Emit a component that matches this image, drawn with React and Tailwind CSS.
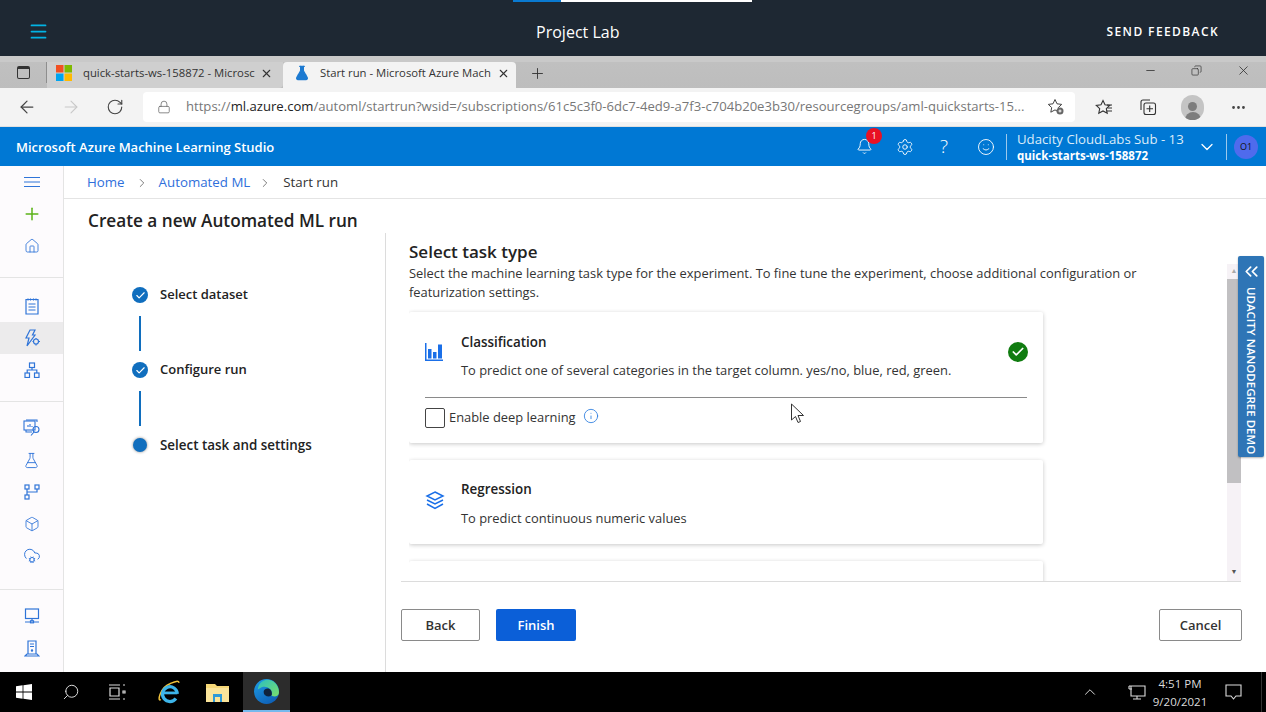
import React from 'react';
import {
  ArrowLeft, ArrowRight, Bell, Box, ChevronRight, ChevronDown, ChevronUp, ChevronsLeft, Copy, FlaskConical,
  Home, Menu, Minus, MoreHorizontal, Plus, RotateCw, Search, Settings, Smile, X, Lock, Info, Check,
  CloudCog
} from 'lucide-react';

const blue = '#1a6fe8';
const star = 'M8 1.500l2 4.300 4.700.6-3.400 3.200.9 4.600L8 11.900l-4.200 2.300.9-4.600L1.300 6.400 6 5.800z';

function NavIcon({ children, active }) {
  return (
    <div className={`h-[32px] flex items-center justify-center text-[#2f74d8] ${active ? 'bg-[#ecebec]' : ''}`}>
      {children}
    </div>
  );
}

function Sidebar() {
  return (
    <div className="w-[64px] shrink-0 bg-[#fdfbfd] border-r border-[#e4e4e4] flex flex-col">
      <div className="pb-[15px] border-b border-[#e4e4e4]">
        <NavIcon>
          <svg width="16" height="10" viewBox="0 0 16 10" stroke="currentColor" strokeWidth="1">
            <path d="M0 .5h16M0 5h16M0 9.500h16" />
          </svg>
        </NavIcon>
        <NavIcon><Plus size={20} strokeWidth={1.8} className="text-[#5bb318]" /></NavIcon>
        <NavIcon><Home size={16} strokeWidth={1.3} /></NavIcon>
      </div>
      <div className="pt-[12px] pb-[15px] border-b border-[#e4e4e4]">
        <NavIcon>
          <svg width="14" height="17" viewBox="0 0 14 17" fill="none" stroke="currentColor" strokeWidth="1.2">
            <path d="M1 1.500h12V16H1zM3 .5v2M5.500.5v2M8.500.5v2M11 .5v2M3.500 6h7M3.500 9h7M3.500 12h7" />
          </svg>
        </NavIcon>
        <NavIcon active>
          <svg width="16" height="18" viewBox="0 0 16 18" fill="none" stroke="currentColor" strokeWidth="1.2">
            <path d="M6 1h5L8.500 6H11l-8 11 2-8H2z" />
            <circle cx="12" cy="12.500" r="2.500" />
            <path d="M12 9v1M12 15v1.500M8.500 12.500h1M14.500 12.500H16" />
          </svg>
        </NavIcon>
        <NavIcon>
          <svg width="16" height="16" viewBox="0 0 16 16" fill="none" stroke="currentColor" strokeWidth="1.2">
            <rect x="5.500" y="1" width="5" height="4.500" />
            <rect x="1" y="11" width="4.500" height="4.500" />
            <rect x="10.500" y="11" width="4.500" height="4.500" />
            <path d="M8 5.500V8M3.200 11V8h9.600v3" />
          </svg>
        </NavIcon>
      </div>
      <div className="pt-[10px] pb-[17px] border-b border-[#e4e4e4]">
        <NavIcon>
          <svg width="18" height="18" viewBox="0 0 18 18" fill="none" stroke="currentColor" strokeWidth="1.1">
            <rect x="1" y="2" width="11" height="9" />
            <path d="M3 11v2h6M3 1h11v2M5 8V6M7 8V5M9 8V7" />
            <circle cx="13" cy="10.500" r="3" />
            <path d="M11 13l-3 3.500" />
          </svg>
        </NavIcon>
        <NavIcon><FlaskConical size={17} strokeWidth={1.3} /></NavIcon>
        <NavIcon>
          <svg width="16" height="16" viewBox="0 0 16 16" fill="none" stroke="currentColor" strokeWidth="1.2">
            <rect x="1" y="1" width="4" height="4" />
            <rect x="11" y="1" width="4" height="4" />
            <rect x="1" y="11" width="4" height="4" />
            <path d="M3 5v6M13 5v3H3" />
          </svg>
        </NavIcon>
        <NavIcon><Box size={16} strokeWidth={1.3} /></NavIcon>
        <NavIcon><CloudCog size={18} strokeWidth={1.3} /></NavIcon>
      </div>
      <div className="pt-[10px]">
        <NavIcon>
          <svg width="16" height="16" viewBox="0 0 16 16" fill="none" stroke="currentColor" strokeWidth="1.2">
            <rect x="1.500" y="1" width="13" height="9.500" />
            <path d="M8 10.500v3M1 14h5M10 14h5" />
            <rect x="6.500" y="12.800" width="3" height="2" />
          </svg>
        </NavIcon>
        <NavIcon>
          <svg width="16" height="17" viewBox="0 0 16 17" fill="none" stroke="currentColor" strokeWidth="1.2">
            <path d="M4 1h8v13H4zM6 4h4M6 6.500h4M1 16l2-2h10l2 2z" />
            <circle cx="8" cy="10.500" r="0.600" />
          </svg>
        </NavIcon>
      </div>
    </div>
  );
}

function StepDone({ label }) {
  return (
    <div className="flex items-center gap-[12px] h-[20px]">
      <div className="w-[16px] h-[16px] rounded-full bg-[#106ebe] flex items-center justify-center">
        <Check size={11} strokeWidth={2.5} className="text-white" />
      </div>
      <span className="text-[13px] font-semibold text-[#222]">{label}</span>
    </div>
  );
}

function Stepper() {
  return (
    <div className="w-[322px] shrink-0 border-r border-[#dcdcdc] pl-[68px] pt-[52px]">
      <StepDone label="Select dataset" />
      <div className="w-[2px] h-[35px] bg-[#106ebe] ml-[7px] mt-[11px] mb-[9px]" />
      <StepDone label="Configure run" />
      <div className="w-[2px] h-[35px] bg-[#106ebe] ml-[7px] mt-[11px] mb-[9px]" />
      <div className="flex items-center gap-[12px] h-[20px]">
        <div className="w-[14px] h-[14px] mx-[1px] rounded-full bg-[#106ebe] shadow-[0_0_3px_#888]" />
        <span className="text-[13.4px] font-semibold text-[#222]">Select task and settings</span>
      </div>
    </div>
  );
}

function Cards() {
  return (
    <div className="w-[634px] flex flex-col gap-[17px]">
      <div className="h-[131px] shrink-0 bg-white rounded-[2px] shadow-[0_1px_4px_rgba(0,0,0,0.22)] px-[16px]">
        <div className="h-[86px] border-b border-[#8a8a8a] flex items-center">
          <svg width="18" height="18" viewBox="0 0 18 18" fill={blue} className="shrink-0 mr-[18px] mt-[-5px]">
            <path d="M0 0h1.500v16.500H18V18H0z" />
            <path d="M3 6h3.500v9.500H3zM8 9h3.500v6.500H8zM13 1.500h4v14h-4z" />
          </svg>
          <div className="flex-1 mt-[4px]">
            <div className="text-[13.4px] font-semibold text-[#222] leading-[19px]">Classification</div>
            <div className="text-[12.9px] text-[#333] leading-[19px] mt-[9px]">To predict one of several categories in the target column. yes/no, blue, red, green.</div>
          </div>
          <div className="w-[20px] h-[20px] rounded-full bg-[#107c10] flex items-center justify-center mt-[-5px] mr-[-1px]">
            <Check size={14} strokeWidth={3} className="text-white" />
          </div>
        </div>
        <div className="flex items-center h-[39px]">
          <div className="w-[20px] h-[20px] border border-[#444] rounded-[2px] mr-[4px]" />
          <span className="text-[12.9px] text-[#333]">Enable deep learning</span>
          <Info size={16} strokeWidth={1.3} className="text-[#2f7fe0] ml-[7px] mt-[-3px]" />
        </div>
      </div>
      <div className="h-[84px] shrink-0 bg-white rounded-[2px] shadow-[0_1px_4px_rgba(0,0,0,0.22)] px-[16px] flex items-center">
        <svg width="20" height="19" viewBox="0 0 20 19" fill="none" stroke={blue} strokeWidth="1.500" className="shrink-0 mr-[16px] mt-[-3px]">
          <path d="M10 1l8 4-8 4-8-4zM2 9l8 4 8-4M2 13l8 4.500 8-4.500" />
        </svg>
        <div className="mt-[3px]">
          <div className="text-[13.4px] font-semibold text-[#222] leading-[19px]">Regression</div>
          <div className="text-[12.9px] text-[#333] leading-[19px] mt-[10px]">To predict continuous numeric values</div>
        </div>
      </div>
      <div className="h-[84px] shrink-0 bg-white rounded-[2px] shadow-[0_1px_4px_rgba(0,0,0,0.22)]" />
    </div>
  );
}

function Content() {
  return (
    <div className="flex-1 min-w-0 flex flex-col">
      <div className="h-[349px] shrink-0 border-b border-[#dcdcdc] flex ml-[15px] mr-[25px]">
        <div className="flex-1 min-w-0 pl-[8px] flex flex-col">
          <div className="text-[17px] font-semibold text-[#222] leading-[24px] pt-[7px]">Select task type</div>
          <div className="text-[12.9px] text-[#333] leading-[19px] pr-[80px]">
            Select the machine learning task type for the experiment. To fine tune the experiment, choose additional configuration or featurization settings.
          </div>
          <div className="flex-1 min-h-0 overflow-hidden pt-[10px]">
            <Cards />
          </div>
        </div>
        <div className="w-[14px] shrink-0 mt-[31px] bg-[#f6f2f6] flex flex-col items-center">
          <div className="h-[15px] flex items-center text-[#aaa] text-[7px]">▲</div>
          <div className="w-full h-[204px] bg-[#c1c0c2]" />
          <div className="flex-1 flex items-end pb-[4px] text-[#555] text-[7px]">▼</div>
        </div>
      </div>
      <div className="flex-1 flex items-start pt-[27px] pl-[15px] pr-[24px] gap-[16px]">
        <button className="w-[79px] h-[32px] pt-[2px] border border-[#8a8a8a] rounded-[2px] bg-white text-[13px] font-semibold text-[#333]">Back</button>
        <button className="w-[80px] h-[32px] pt-[2px] rounded-[2px] bg-[#0b5fd8] text-[13px] font-semibold text-white">Finish</button>
        <button className="ml-auto w-[83px] h-[32px] pt-[2px] border border-[#8a8a8a] rounded-[2px] bg-white text-[13px] font-semibold text-[#333]">Cancel</button>
      </div>
    </div>
  );
}

function EdgeLogo() {
  return (
    <svg width="25" height="25" viewBox="0 0 26 26">
      <defs>
        <linearGradient id="edgeBlue" x1="0" y1="0" x2="0.6" y2="1">
          <stop offset="0" stopColor="#1e9fe6" />
          <stop offset="1" stopColor="#0f62b8" />
        </linearGradient>
        <linearGradient id="edgeGreen" x1="0" y1="0" x2="1" y2="1">
          <stop offset="0" stopColor="#2bbfc0" />
          <stop offset="1" stopColor="#7be06a" />
        </linearGradient>
      </defs>
      <circle cx="13" cy="13" r="13" fill="url(#edgeBlue)" />
      <path d="M6 5c3-4 8-5 12-3.500 5 2 8 7 8 12.500 0 3-3 4.500-6 4-1.500-.3-2-1-1.500-2.500C19 11 15 8 11 8 9 8 7 8.500 4 11 4 9 5 6.500 6 5z" fill="url(#edgeGreen)" />
      <path d="M17 18c-4 .5-7-1-7-4.500 0-2 2-3.500 4-3.500 3 0 5 2.500 4.500 6.500z" fill="#10233c" />
    </svg>
  );
}

export default function App() {
  return (
    <div className="relative w-[1266px] h-[712px] overflow-hidden bg-white font-['Open_Sans',sans-serif]">
      {/* lab bar */}
      <div className="relative h-[56px] bg-[#1e2833] flex items-center justify-between pl-[28px] pr-[47px] pt-[7px]">
        <div className="absolute left-[513px] top-0 w-[48px] h-[2px] bg-[#0a7ad1]" />
        <div className="absolute left-[561px] top-0 w-[191px] h-[2px] bg-white" />
        <Menu size={21} strokeWidth={2} className="text-[#02b3e4]" />
        <span className="text-[16px] text-white">Project Lab</span>
        <span className="text-[12px] font-semibold tracking-[1.4px] text-white">SEND FEEDBACK</span>
      </div>

      {/* browser tabs */}
      <div className="h-[32px] bg-gradient-to-b from-[#c0c0c0] to-[#bdbdbd] border-t-[6px] border-[#c9c9c9] flex items-stretch text-[#333]">
        <div className="w-[47px] shrink-0 flex items-center justify-center border-r border-[#8e8e8e] mb-[5px]">
          <div className="w-[13px] h-[13px] border-[1.5px] border-[#333] border-t-[3px] rounded-[2px]" />
        </div>
        <div className="w-[236px] shrink-0 bg-[#cfcfcf] rounded-br-[4px] flex items-center pl-[9px] pr-[10px] pb-[4px]">
          <svg width="16" height="16" viewBox="0 0 16 16" className="shrink-0 mr-[11px]">
            <path d="M0 0h7.500v7.500H0z" fill="#f25022" />
            <path d="M8.500 0H16v7.500H8.500z" fill="#7fba00" />
            <path d="M0 8.500h7.500V16H0z" fill="#00a4ef" />
            <path d="M8.500 8.500H16V16H8.500z" fill="#ffb900" />
          </svg>
          <span className="flex-1 min-w-0 whitespace-nowrap text-[11.3px]">quick-starts-ws-158872 - Microsc</span>
          <X size={13} strokeWidth={2} className="shrink-0 ml-[4px]" />
        </div>
        <div className="w-[233px] shrink-0 bg-[#f3f3f3] rounded-t-[4px] flex items-center pl-[11px] pr-[6px] pb-[4px]">
          <FlaskConical size={16} fill="#1c7ad1" className="shrink-0 mr-[10px] text-[#1c7ad1]" />
          <span className="flex-1 min-w-0 whitespace-nowrap text-[11.3px]">Start run - Microsoft Azure Mach</span>
          <X size={13} strokeWidth={2} className="shrink-0 ml-[4px]" />
        </div>
        <div className="flex items-center pl-[13px] pb-[4px]"><Plus size={17} strokeWidth={1.3} /></div>
        <div className="ml-auto flex items-center gap-[34px] pr-[15px] pb-[9px]">
          <Minus size={13} strokeWidth={1.5} />
          <Copy size={11} strokeWidth={1.5} className="-scale-x-100" />
          <X size={15} strokeWidth={1.3} />
        </div>
      </div>

      {/* address bar */}
      <div className="h-[39px] bg-[#f3f3f3] border-b border-[#e0e0e0] flex items-center pl-[17px] pr-[17px] text-[#444]">
        <ArrowLeft size={20} strokeWidth={1.5} />
        <ArrowRight size={20} strokeWidth={1.3} className="ml-[24px] text-[#c8c8c8]" />
        <RotateCw size={18} strokeWidth={1.5} className="ml-[25px]" />
        <div className="w-[932px] h-[30px] ml-[19px] bg-white rounded-[4px] flex items-center pl-[14px] pr-[10px]">
          <Lock size={14} strokeWidth={1.3} className="shrink-0 text-[#666]" />
          <span className="ml-[15px] flex-1 min-w-0 whitespace-nowrap text-[13.1px] text-[#777]">
            https://<span className="text-[#222]">ml.azure.com</span>/automl/startrun?wsid=/subscriptions/61c5c3f0-6dc7-4ed9-a7f3-c704b20e3b30/resourcegroups/aml-quickstarts-15...
          </span>
          <svg width="18" height="18" viewBox="0 0 18 18" fill="none" stroke="#444" strokeWidth="1" className="shrink-0">
            <path d={star} />
            <circle cx="13" cy="13" r="3.500" fill="#666" stroke="none" />
            <path d="M11.500 13h3M13 11.500v3" stroke="#fff" />
          </svg>
        </div>
        <svg width="18" height="17" viewBox="0 0 18 17" fill="none" stroke="#333" strokeWidth="1.1" className="ml-[20px]">
          <path d={star} />
          <path d="M12 6h5M12.500 9h4.500M11.500 12h5.500" />
        </svg>
        <svg width="18" height="18" viewBox="0 0 18 18" fill="none" stroke="#333" strokeWidth="1.1" className="ml-[26px]">
          <path d="M2 12V4a2 2 0 0 1 2-2h7" />
          <rect x="5" y="5" width="11.500" height="11.500" rx="2" />
          <path d="M10.700 7.500v6.500M7.500 10.700h6.500" />
        </svg>
        <div className="w-[23px] h-[25px] rounded-full bg-[#c4c4c4] ml-[24px] flex flex-col items-center justify-end overflow-hidden">
          <div className="w-[9px] h-[9px] rounded-full bg-[#7d7d7d]" />
          <div className="w-[16px] h-[8px] rounded-t-full bg-[#7d7d7d] mt-[1px]" />
        </div>
        <MoreHorizontal size={17} className="ml-[26px]" />
      </div>

      {/* azure header */}
      <div className="h-[39px] bg-[#0078d4] flex items-center pl-[16px] text-white">
        <span className="text-[13px] font-semibold pt-[2px]">Microsoft Azure Machine Learning Studio</span>
        <div className="ml-auto flex items-center">
          <div className="relative">
            <Bell size={17} strokeWidth={1.3} />
            <div className="absolute left-[10px] top-[-10px] w-[16px] h-[16px] rounded-full bg-[#e81123] text-[9px] flex items-center justify-center">1</div>
          </div>
          <Settings size={18} strokeWidth={1.2} className="ml-[23px]" />
          <span className="ml-[26px] w-[12px] text-[19px] font-light leading-none">?</span>
          <Smile size={18} strokeWidth={1.2} className="ml-[25px]" />
          <div className="w-px h-[26px] bg-[#9cc9ec] ml-[11px]" />
          <div className="ml-[10px] w-[172px] whitespace-nowrap">
            <div className="text-[13.2px] leading-[17px] text-[#dcecf9]">Udacity CloudLabs Sub - 13</div>
            <div className="text-[11.5px] font-bold leading-[15px]">quick-starts-ws-158872</div>
          </div>
          <ChevronDown size={20} strokeWidth={1.5} className="ml-[8px]" />
          <div className="w-px h-[26px] bg-[#9cc9ec] ml-[9px]" />
          <div className="w-[24px] h-[24px] rounded-full bg-[#4f6bed] ml-[7px] mr-[8px] text-[9px] text-[#111] flex items-center justify-center">O1</div>
        </div>
      </div>

      {/* studio body */}
      <div className="h-[506px] flex">
        <Sidebar />
        <div className="flex-1 min-w-0 flex flex-col">
          <div className="h-[33px] shrink-0 border-b border-[#e4e4e4] pl-[23px] pt-[2px] flex items-center text-[13.3px]">
            <span className="text-[#2f6fdb]">Home</span>
            <ChevronRight size={14} strokeWidth={1.3} className="mx-[10px] text-[#555]" />
            <span className="text-[#2f6fdb]">Automated ML</span>
            <ChevronRight size={14} strokeWidth={1.3} className="ml-[8px] mr-[11px] text-[#555]" />
            <span className="text-[#333]">Start run</span>
          </div>
          <div className="h-[34px] shrink-0 pl-[24px] pt-[9px] text-[17.2px] font-semibold text-[#222] leading-[26px]">Create a new Automated ML run</div>
          <div className="flex-1 min-h-0 flex">
            <Stepper />
            <Content />
          </div>
        </div>
      </div>

      {/* taskbar */}
      <div className="h-[40px] bg-black flex items-center text-[#dcdcdc]">
        <div className="w-[47px] flex justify-center">
          <svg width="16" height="16" viewBox="0 0 16 16" fill="#fff">
            <path d="M0 2.200 6.600 1.300v6.300H0zM7.400 1.200 16 0v7.600H7.400zM0 8.400h6.600v6.300L0 13.800zM7.400 8.400H16V16l-8.600-1.200z" />
          </svg>
        </div>
        <div className="w-[47px] flex justify-center"><Search size={18} strokeWidth={1.3} className="-scale-x-100" /></div>
        <div className="w-[47px] flex justify-center">
          <svg width="17" height="16" viewBox="0 0 17 16" fill="none" stroke="currentColor" strokeWidth="1.2">
            <path d="M0 1h11M0 15h11M1 4h9v8H1zM14 1h2M14 7h2v2h-2zM14 15h2" />
          </svg>
        </div>
        <div className="w-[50px] ml-[3px] flex justify-center">
          <svg width="24" height="24" viewBox="0 0 26 26" fill="none">
            <path d="M4 21C0 25 3 8 14 4 19 2 23 0 24 3" stroke="#f0c33c" strokeWidth="1.600" />
            <path d="M22 15a8 8 0 1 0-1.500 5" stroke="#3db5ea" strokeWidth="3.500" />
            <path d="M7 14h15" stroke="#3db5ea" strokeWidth="3" />
          </svg>
        </div>
        <div className="w-[46px] flex justify-center">
          <svg width="23" height="20" viewBox="0 0 23 20">
            <path d="M0 2h9l2 2h12v16H0z" fill="#f6d776" />
            <path d="M0 6h23v14H0z" fill="#fbe49a" />
            <path d="M7 12h9v8h-2v-5H9v5H7z" fill="#2f9ad8" />
          </svg>
        </div>
        <div className="w-[47px] ml-[3px] h-full bg-[#2c2c2c] border-b-[2px] border-[#76b9ed] flex items-center justify-center">
          <EdgeLogo />
        </div>
        <div className="ml-auto flex items-center">
          <ChevronUp size={18} strokeWidth={1.3} />
          <svg width="18" height="17" viewBox="0 0 18 17" fill="none" stroke="currentColor" strokeWidth="1.100" className="ml-[29px]">
            <path d="M3 2h14v10H3zM9 12v3M5 15h8M1 2v3M3 2H1M1 5h3" />
          </svg>
          <div className="w-[60px] ml-[4px] pt-[1px] text-center text-[11.5px] leading-[18px]">
            <div>4:51 PM</div>
            <div>9/20/2021</div>
          </div>
          <svg width="17" height="17" viewBox="0 0 17 17" fill="none" stroke="currentColor" strokeWidth="1.1" className="ml-[15px]">
            <path d="M1 1h15v11h-5l-2.500 3L6 12H1z" />
          </svg>
          <div className="w-px h-[40px] bg-[#333] ml-[19px] mr-[4px]" />
        </div>
      </div>

      {/* nanodegree side tab */}
      <div className="absolute left-[1238px] top-[256px] w-[26px] h-[201px] bg-[#2e75b6] rounded-[2px] flex flex-col items-center text-white pt-[5px] shadow-[0_1px_2px_rgba(0,0,0,0.3)]">
        <ChevronsLeft size={21} strokeWidth={2} />
        <span className="[writing-mode:vertical-rl] text-[11.5px] font-semibold mt-[5px] whitespace-nowrap">UDACITY NANODEGREE DEMO</span>
      </div>

      {/* mouse cursor */}
      <svg width="16" height="22" viewBox="0 0 16 22" className="absolute left-[790px] top-[403px]">
        <path d="M1.500 1v16l4-3.500 2.500 6 2.500-1-2.500-6h5.500z" fill="#fff" stroke="#333" strokeWidth="1" />
      </svg>
    </div>
  );
}
